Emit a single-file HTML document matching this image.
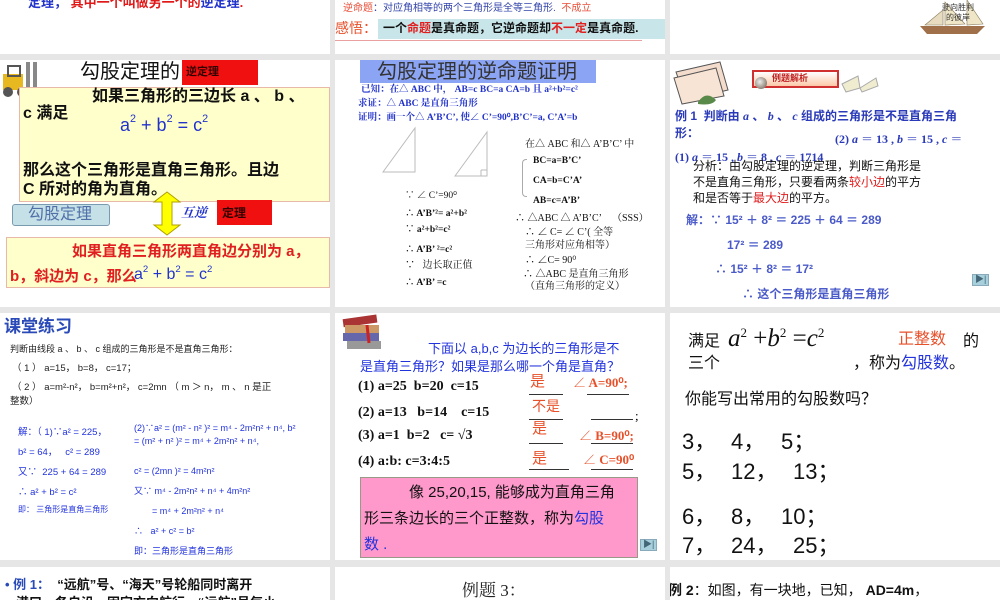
<!DOCTYPE html>
<html><head><meta charset="utf-8"><style>
*{margin:0;padding:0;box-sizing:border-box}
body{width:1000px;height:600px;background:#e6e6e6;position:relative;overflow:hidden;font-family:"Liberation Sans","Noto Sans CJK SC",sans-serif}
.p{position:absolute;background:#fff;overflow:hidden}
.t{position:absolute;white-space:nowrap;line-height:1}
.s{font-family:"Liberation Serif","Noto Serif CJK SC",serif}
.b{font-weight:bold}
.bl{color:#2233cc}
.rd{color:#e02020}
.or{color:#e8502a}
sup{font-size:60%;vertical-align:top;position:relative;top:-2px}
.n{position:absolute;font-size:22px;color:#111;line-height:1;font-family:"Liberation Sans",sans-serif}
</style></head><body>

<!-- Row 1 -->
<div class="p" style="left:0;top:0;width:330px;height:54px">
 <div class="t b" style="left:28px;top:-4px;font-size:13px"><span class="bl">定理，</span> <span style="color:#e01818">其中一个叫做另一个的</span><span class="bl">逆定理</span><span class="rd">.</span></div>
</div>
<div class="p" style="left:335px;top:0;width:330px;height:54px">
 <div class="t" style="left:8px;top:4px;font-size:10px;color:#e8503a">逆命题<span style="color:#3344aa">：对应角相等的两个三角形是全等三角形.</span>&nbsp; 不成立</div>
 <div class="t or" style="left:0;top:21px;font-size:14px">感悟：</div>
 <div style="position:absolute;left:43px;top:19px;width:287px;height:20px;background:#c8e6ea"></div>
 <div class="t b" style="left:48px;top:22px;font-size:12px;color:#111">一个<span class="rd">命题</span>是真命题，它逆命题却<span class="rd">不一定</span>是真命题.</div>
 <div style="position:absolute;left:0;top:40px;width:307px;height:1px;background:#e8a0a0"></div>
</div>
<div class="p" style="left:670px;top:0;width:330px;height:54px">
 <svg style="position:absolute;left:245px;top:0" width="80" height="38"><path d="M5 26 L70 26 L62 34 L12 34Z" fill="#a0704a"/><path d="M30 25 L30 2 L50 24Z" fill="#efe6c8" stroke="#8a7a5a" stroke-width=".6"/><path d="M52 25 L52 0 L68 24Z" fill="#efe6c8" stroke="#8a7a5a" stroke-width=".6"/><path d="M10 25 L28 10 L28 25Z" fill="#e8dcc0" stroke="#8a7a5a" stroke-width=".6"/></svg>
 <div class="t" style="left:272px;top:3px;font-size:8px;color:#333;line-height:10px;text-align:center">驶向胜利<br>的彼岸</div>
</div>

<!-- Row 2 col1 -->
<div class="p" style="left:0;top:60px;width:330px;height:247px">
 <svg style="position:absolute;left:0;top:0" width="44" height="40"><rect x="3" y="14" width="20" height="16" fill="#e8b820"/><rect x="8" y="6" width="12" height="10" fill="none" stroke="#555" stroke-width="2"/><rect x="26" y="2" width="4" height="30" fill="#888"/><rect x="33" y="2" width="4" height="30" fill="#888"/><circle cx="8" cy="32" r="5" fill="#555"/><circle cx="22" cy="32" r="5" fill="#555"/><path d="M30 33 L44 33" stroke="#999" stroke-width="2"/></svg>
 <div class="t" style="left:80px;top:2px;font-size:20px;color:#111">勾股定理的</div>
 <div style="position:absolute;left:182px;top:0;width:76px;height:25px;background:#f01010"></div>
 <div class="t b" style="left:186px;top:7px;font-size:11px;color:#300">逆定理</div>
 <div style="position:absolute;left:19px;top:27px;width:311px;height:115px;background:#ffffcc;border:1px solid #e8b8a8"></div>
 <div class="t b" style="left:92px;top:29px;font-size:16px;color:#111">如果三角形的三边长 a 、 b 、</div>
 <div class="t b" style="left:23px;top:46px;font-size:16px;color:#111">c 满足</div>
 <div class="t bl" style="left:120px;top:56px;font-size:18px">a<sup>2</sup> + b<sup>2</sup> = c<sup>2</sup></div>
 <div class="t b" style="left:23px;top:103px;font-size:16px;color:#111">那么这个三角形是直角三角形。且边</div>
 <div class="t b" style="left:23px;top:122px;font-size:16px;color:#111">C 所对的角为直角。</div>
 <div style="position:absolute;left:12px;top:144px;width:98px;height:22px;background:#c6e0e8;border:1px solid #7a9ab0;border-radius:3px"></div>
 <div class="t" style="left:28px;top:147px;font-size:16px;color:#5070a8">勾股定理</div>
 <svg style="position:absolute;left:152px;top:131px" width="30" height="45"><path d="M15 1 L28 11 L20 11 L20 34 L28 34 L15 44 L2 34 L10 34 L10 11 L2 11Z" fill="#ffff00" stroke="#b0a000" stroke-width="1"/></svg>
 <div class="t bl b s" style="left:181px;top:146px;font-size:13px;font-style:italic">互逆</div>
 <div style="position:absolute;left:217px;top:140px;width:55px;height:25px;background:#f01010"></div>
 <div class="t b" style="left:222px;top:147px;font-size:12px;color:#300">定理</div>
 <div style="position:absolute;left:6px;top:177px;width:324px;height:51px;background:#ffffcc;border:1px solid #e8b8a8"></div>
 <div class="t b rd" style="left:72px;top:184px;font-size:15px">如果直角三角形两直角边分别为 a，</div>
 <div class="t b rd" style="left:10px;top:209px;font-size:15px">b，斜边为 c，那么</div>
 <div class="t bl" style="left:134px;top:207px;font-size:16px">a<sup>2</sup> + b<sup>2</sup> = c<sup>2</sup></div>
</div>

<!-- Row 2 col2 -->
<div class="p s" style="left:335px;top:60px;width:330px;height:247px">
 <div style="position:absolute;left:25px;top:0;width:236px;height:23px;background:#8ca4f4"></div>
 <div class="t" style="left:42px;top:2px;font-size:20px;color:#333;font-family:'Liberation Sans','Noto Sans CJK SC',sans-serif">勾股定理的逆命题证明</div>
 <div class="t b bl" style="left:26px;top:26px;font-size:9.5px">已知：在△ ABC 中， AB=c BC=a CA=b 且 a²+b²=c²</div>
 <div class="t b bl" style="left:23px;top:40px;font-size:9.5px">求证：△ ABC 是直角三角形</div>
 <div class="t b bl" style="left:23px;top:54px;font-size:9.5px">证明：画一个△ A’B’C’, 使∠ C’=90⁰,B’C’=a, C’A’=b</div>
 <svg style="position:absolute;left:40px;top:66px" width="120" height="60"><path d="M8 46 L40 2 L40 46Z" fill="none" stroke="#bbb"/><path d="M80 50 L112 6 L112 50Z M106 44 L106 50 M106 44 L112 44" fill="none" stroke="#bbb"/></svg>
 <div class="t" style="left:70px;top:132px;font-size:9.5px;color:#111">∵ ∠ C’=90⁰</div>
 <div class="t b" style="left:70px;top:150px;font-size:9.5px;color:#111">∴ A’B’²= a²+b²</div>
 <div class="t b" style="left:70px;top:166px;font-size:9.5px;color:#111">∵ a²+b²=c²</div>
 <div class="t b" style="left:70px;top:186px;font-size:9.5px;color:#111">∴ A’B’ ²=c²</div>
 <div class="t" style="left:70px;top:201px;font-size:10px;color:#111">∵&nbsp;&nbsp; 边长取正值</div>
 <div class="t b" style="left:70px;top:219px;font-size:9.5px;color:#111">∴ A’B’ =c</div>
 <div class="t" style="left:190px;top:80px;font-size:10px;color:#111">在△ ABC 和△ A’B’C’ 中</div>
 <div style="position:absolute;left:187px;top:99px;width:5px;height:38px;border:1px solid #aaa;border-right:none;border-radius:4px 0 0 4px"></div>
 <div class="t b" style="left:198px;top:97px;font-size:9.5px;color:#111">BC=a=B’C’</div>
 <div class="t b" style="left:198px;top:117px;font-size:9.5px;color:#111">CA=b=C’A’</div>
 <div class="t b" style="left:198px;top:137px;font-size:9.5px;color:#111">AB=c=A’B’</div>
 <div class="t" style="left:180px;top:154px;font-size:10px;color:#111">∴ △ABC △ A’B’C’&nbsp;&nbsp;&nbsp; （SSS）</div>
 <div class="t" style="left:190px;top:168px;font-size:10px;color:#111">∴ ∠ C= ∠ C’( 全等</div>
 <div class="t" style="left:190px;top:181px;font-size:10px;color:#111">三角形对应角相等）</div>
 <div class="t" style="left:190px;top:196px;font-size:10px;color:#111">∴ ∠C= 90⁰</div>
 <div class="t" style="left:188px;top:210px;font-size:10px;color:#111">∴ △ABC 是直角三角形</div>
 <div class="t" style="left:190px;top:222px;font-size:10px;color:#111">（直角三角形的定义）</div>
</div>

<!-- Row 2 col3 -->
<div class="p" style="left:670px;top:60px;width:330px;height:247px">
 <svg style="position:absolute;left:2px;top:0" width="62" height="46"><path d="M4 12 L48 2 L56 30 L14 40Z" fill="#f4dccc" stroke="#555"/><path d="M2 18 L44 8 L52 36 L10 44Z" fill="#f8e4d4" stroke="#555"/><path d="M26 42 Q34 30 44 40 Q40 46 26 44Z" fill="#5a8a4a"/></svg>
 <div style="position:absolute;left:82px;top:10px;width:87px;height:18px;background:linear-gradient(#fff,#fcc8a8);border:2px solid #d03030"></div>
 <div class="t b" style="left:102px;top:14px;font-size:9px;color:#c02020">例题解析</div>
 <div style="position:absolute;left:85px;top:17px;width:12px;height:12px;border-radius:50%;background:radial-gradient(circle at 40% 40%,#eee,#654)"></div>
 <svg style="position:absolute;left:170px;top:12px" width="40" height="22"><path d="M2 12 L18 4 L20 16 L6 20Z M20 16 L36 6 L38 14 L22 20Z" fill="#f0ecd0" stroke="#aaa"/></svg>
 <div class="t b" style="left:5px;top:50px;font-size:12px;color:#2a3ab8">例 1 &nbsp;判断由 <i class="s">a</i> 、 <i class="s">b</i> 、 <i class="s">c</i> 组成的三角形是不是直角三角</div>
 <div class="t b" style="left:5px;top:67px;font-size:12px;color:#2a3ab8">形：</div>
 <div class="t b s" style="left:165px;top:73px;font-size:12px;color:#2a3ab8">(2) <i>a</i> ＝ 13 , <i>b</i> ＝ 15 , <i>c</i> ＝</div>
 <div class="t b s" style="left:5px;top:91px;font-size:12px;color:#2a3ab8">(1) <i>a</i> ＝ 15 , <i>b</i> ＝ 8 , <i>c</i> ＝ 1714</div>
 <div class="t" style="left:23px;top:98px;font-size:12px;color:#111;line-height:16px">分析：由勾股定理的逆定理，判断三角形是<br>不是直角三角形，只要看两条<span class="rd">较小边</span>的平方<br>和是否等于<span class="rd">最大边</span>的平方。</div>
 <div class="t b" style="left:16px;top:154px;font-size:12px;color:#4a5ac8">解：∵ 15² ＋ 8² ＝ 225 ＋ 64 ＝ 289</div>
 <div class="t b" style="left:57px;top:179px;font-size:12px;color:#4a5ac8">17² ＝ 289</div>
 <div class="t b" style="left:45px;top:203px;font-size:12px;color:#4a5ac8">∴ 15² ＋ 8² ＝ 17²</div>
 <div class="t b" style="left:72px;top:228px;font-size:12px;color:#4a5ac8">∴ 这个三角形是直角三角形</div>
 <div style="position:absolute;left:302px;top:214px;width:17px;height:12px;background:#a8d0dc;border:1px solid #8ab"></div>
 <div class="t" style="left:305px;top:215px;font-size:9px;color:#467">▶|</div>
</div>

<!-- Row 3 col1 -->
<div class="p" style="left:0;top:313px;width:330px;height:247px">
 <div class="t b" style="left:4px;top:5px;font-size:17px;color:#2a4ab8">课堂练习</div>
 <div class="t" style="left:10px;top:32px;font-size:9px;color:#222">判断由线段 a 、 b 、 c 组成的三角形是不是直角三角形：</div>
 <div class="t" style="left:12px;top:51px;font-size:9.5px;color:#222">（ 1 ） a=15， b=8， c=17；</div>
 <div class="t" style="left:12px;top:70px;font-size:9.5px;color:#222">（ 2 ） a=m²-n²， b=m²+n²， c=2mn （ m ＞ n， m 、 n 是正</div>
 <div class="t" style="left:10px;top:84px;font-size:9.5px;color:#222">整数）</div>
 <div class="t bl" style="left:18px;top:110px;font-size:9.5px;line-height:20px;color:#2233dd">解：（ 1)∵a² = 225，<br>b² = 64，&nbsp;&nbsp; c² = 289<br>又∵&nbsp; 225 + 64 = 289<br>∴ a² + b² = c²</div>
 <div class="t" style="left:18px;top:193px;font-size:8px;color:#2233dd">即： 三角形是直角三角形</div>
 <div class="t" style="left:134px;top:109px;font-size:9px;color:#2233dd;line-height:13px">(2)∵a² = (m² - n² )² = m⁴ - 2m²n² + n⁴, b²<br>= (m² + n² )² = m⁴ + 2m²n² + n⁴,</div>
 <div class="t" style="left:134px;top:154px;font-size:9px;color:#2233dd">c² = (2mn )² = 4m²n²</div>
 <div class="t" style="left:134px;top:174px;font-size:9px;color:#2233dd">又∵ m⁴ - 2m²n² + n⁴ + 4m²n²</div>
 <div class="t" style="left:152px;top:194px;font-size:9px;color:#2233dd">= m⁴ + 2m²n² + n⁴</div>
 <div class="t" style="left:134px;top:214px;font-size:9px;color:#2233dd">∴&nbsp;&nbsp; a² + c² = b²</div>
 <div class="t" style="left:134px;top:234px;font-size:9px;color:#2233dd">即：三角形是直角三角形</div>
</div>

<!-- Row 3 col2 -->
<div class="p" style="left:335px;top:313px;width:330px;height:247px">
 <svg style="position:absolute;left:4px;top:0" width="46" height="42"><rect x="4" y="4" width="34" height="8" fill="#a33" transform="rotate(-8 20 8)"/><rect x="6" y="12" width="34" height="8" fill="#c96"/><rect x="4" y="20" width="36" height="8" fill="#66a"/><rect x="8" y="28" width="34" height="8" fill="#999"/><path d="M28 12 L30 30" stroke="#c22" stroke-width="3"/></svg>
 <div class="t" style="left:93px;top:29px;font-size:13px;color:#2233dd">下面以 a,b,c 为边长的三角形是不</div>
 <div class="t" style="left:25px;top:47px;font-size:13px;color:#2233dd">是直角三角形？如果是那么哪一个角是直角？</div>
 <div class="t b s" style="left:23px;top:67px;font-size:14px;color:#111">(1) a=25&nbsp; b=20&nbsp; c=15</div>
 <div class="t b s" style="left:23px;top:93px;font-size:14px;color:#111">(2) a=13&nbsp;&nbsp; b=14&nbsp;&nbsp;&nbsp; c=15</div>
 <div class="t b s" style="left:23px;top:116px;font-size:14px;color:#111">(3) a=1&nbsp; b=2&nbsp;&nbsp; c= √3</div>
 <div class="t b s" style="left:23px;top:142px;font-size:14px;color:#111">(4) a:b: c=3:4:5</div>
 <div class="t or" style="left:195px;top:61px;font-size:15px">是</div>
 <div class="t or" style="left:197px;top:86px;font-size:14px">不是</div>
 <div class="t or" style="left:197px;top:108px;font-size:15px">是</div>
 <div class="t or" style="left:197px;top:138px;font-size:15px">是</div>
 <div style="position:absolute;left:194px;top:81px;width:34px;border-top:1px solid #333"></div>
 <div style="position:absolute;left:194px;top:106px;width:34px;border-top:1px solid #333"></div>
 <div style="position:absolute;left:194px;top:130px;width:34px;border-top:1px solid #333"></div>
 <div style="position:absolute;left:194px;top:156px;width:40px;border-top:1px solid #333"></div>
 <div class="t b s or" style="left:238px;top:63px;font-size:13px"><span style="font-weight:normal">∠</span> A=90⁰;</div>
 <div class="t s" style="left:300px;top:96px;font-size:13px">;</div>
 <div class="t b s or" style="left:244px;top:116px;font-size:13px"><span style="font-weight:normal">∠</span> B=90⁰;</div>
 <div class="t b s or" style="left:248px;top:140px;font-size:13px"><span style="font-weight:normal">∠</span> C=90⁰</div>
 <div style="position:absolute;left:252px;top:81px;width:42px;border-top:1px solid #333"></div>
 <div style="position:absolute;left:256px;top:106px;width:42px;border-top:1px solid #333"></div>
 <div style="position:absolute;left:256px;top:130px;width:42px;border-top:1px solid #333"></div>
 <div style="position:absolute;left:256px;top:156px;width:42px;border-top:1px solid #333"></div>
 <div style="position:absolute;left:25px;top:164px;width:278px;height:81px;background:#ff99cc;border:1px solid #998"></div>
 <div class="t" style="left:74px;top:172px;font-size:15px;color:#111">像 25,20,15, 能够成为直角三角</div>
 <div class="t" style="left:29px;top:198px;font-size:15px;color:#111">形三条边长的三个正整数，称为<span style="color:#2233dd">勾股</span></div>
 <div class="t" style="left:29px;top:224px;font-size:15px;color:#2233dd">数 .</div>
 <div style="position:absolute;left:305px;top:226px;width:17px;height:12px;background:#a8d0dc;border:1px solid #8ab"></div>
 <div class="t" style="left:308px;top:227px;font-size:9px;color:#467">▶|</div>
</div>

<!-- Row 3 col3 -->
<div class="p" style="left:670px;top:313px;width:330px;height:247px">
 <div class="t" style="left:18px;top:21px;font-size:16px;color:#111">满足</div>
 <div class="t s" style="left:58px;top:13px;font-size:25px;color:#111;font-style:italic">a<span style="font-size:13px;vertical-align:top;font-style:normal">2</span> <span style="font-style:normal">+</span>b<span style="font-size:13px;vertical-align:top;font-style:normal">2</span> <span style="font-style:normal">=</span>c<span style="font-size:13px;vertical-align:top;font-style:normal">2</span></div>
 <div class="t or" style="left:228px;top:19px;font-size:16px">正整数</div>
 <div class="t" style="left:293px;top:21px;font-size:16px;color:#111">的</div>
 <div class="t" style="left:18px;top:43px;font-size:16px;color:#111">三个</div>
 <div class="t" style="left:183px;top:43px;font-size:16px;color:#111">，称为<span style="color:#2233dd">勾股数</span>。</div>
 <div class="t" style="left:15px;top:79px;font-size:16px;color:#111">你能写出常用的勾股数吗？</div>
 <div class="n" style="left:12px;top:118px">3，</div><div class="n" style="left:61px;top:118px">4，</div><div class="n" style="left:111px;top:118px">5；</div>
 <div class="n" style="left:12px;top:148px">5，</div><div class="n" style="left:61px;top:148px">12，</div><div class="n" style="left:123px;top:148px">13；</div>
 <div class="n" style="left:12px;top:193px">6，</div><div class="n" style="left:61px;top:193px">8，</div><div class="n" style="left:111px;top:193px">10；</div>
 <div class="n" style="left:12px;top:222px">7，</div><div class="n" style="left:61px;top:222px">24，</div><div class="n" style="left:123px;top:222px">25；</div>
</div>

<!-- Row 4 -->
<div class="p" style="left:0;top:567px;width:330px;height:33px">
 <div class="t b" style="left:5px;top:11px;font-size:13px;color:#111"><span style="color:#2a4ab8">• 例 1：</span>&nbsp; “远航”号、“海天”号轮船同时离开</div>
 <div class="t b" style="left:16px;top:29px;font-size:13px;color:#111">港口，各自沿一固定方向航行，“远航”号每小</div>
</div>
<div class="p" style="left:335px;top:567px;width:330px;height:33px">
 <div class="t s" style="left:127px;top:15px;font-size:17px;color:#222">例题 3：</div>
</div>
<div class="p" style="left:670px;top:567px;width:330px;height:33px">
 <div class="t" style="left:-2px;top:16px;font-size:14px;color:#111"><b>例 2</b>：如图，有一块地，已知， <b>AD=4m</b>，</div>
</div>
</body></html>
